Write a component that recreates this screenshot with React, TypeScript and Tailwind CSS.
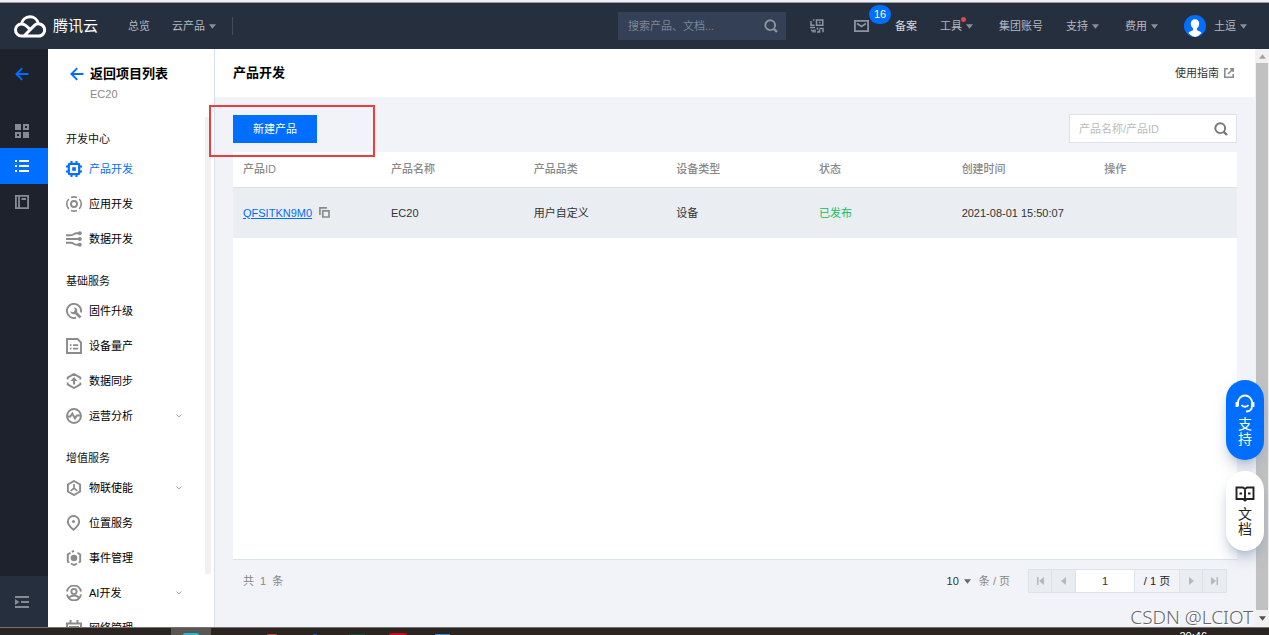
import { ReactNode } from "react";

const GREY = "#8b8b8b";

const Caret = ({ className = "" }: { className?: string }) => (
  <svg viewBox="0 0 8 5" className={`w-[7px] h-[5px] shrink-0 ${className}`} fill="currentColor">
    <path d="M0 0h8L4 5z" />
  </svg>
);

const Icon = ({ children }: { children: ReactNode }) => (
  <svg viewBox="0 0 16 16" className="w-4 h-4 shrink-0" fill="none" stroke="currentColor" strokeWidth="1.9">
    {children}
  </svg>
);

const ArrowLeft = () => (
  <svg viewBox="0 0 14 14" className="w-[14px] h-[14px] shrink-0" fill="none" stroke="#006eff" strokeWidth="1.9">
    <path d="M13.5 7H2M7.2 1.2 1.4 7l5.8 5.8" />
  </svg>
);

const SearchIcon = ({ className = "" }: { className?: string }) => (
  <svg viewBox="0 0 14 14" className={`w-[14px] h-[14px] shrink-0 ${className}`} fill="none" stroke="currentColor" strokeWidth="1.9">
    <circle cx="6.2" cy="6.2" r="4.9" />
    <path d="m9.6 9.6 3.4 3.4" strokeWidth="2.4" />
  </svg>
);

const groups = [
  {
    title: "开发中心",
    items: [
      {
        label: "产品开发",
        active: true,
        icon: (
          <>
            <rect x="2.8" y="2.8" width="10.4" height="10.4" rx="1" strokeWidth="2.2" />
            <rect x="6.2" y="6.2" width="3.6" height="3.6" fill="currentColor" stroke="none" />
            <path d="M5.5 0v3M10.5 0v3M5.5 13v3M10.5 13v3M0 5.5h3M0 10.5h3M13 5.5h3M13 10.5h3" strokeWidth="2" />
          </>
        ),
      },
      {
        label: "应用开发",
        icon: (
          <>
            <circle cx="8" cy="8" r="3" />
            <path d="M5 1.6a7.2 7.2 0 0 1 6 0M5 14.4a7.2 7.2 0 0 0 6 0M2.8 3a7.2 7.2 0 0 0 0 10M13.2 3a7.2 7.2 0 0 1 0 10" strokeWidth="1.6" />
          </>
        ),
      },
      {
        label: "数据开发",
        icon: (
          <>
            <path d="M0 4.2h5c2.5 0 3-2 5.5-2h3M0 8h14M0 11.8h5c2.5 0 3 2 5.5 2h3" />
            <circle cx="13.8" cy="2.2" r="2" fill="currentColor" stroke="none" />
            <circle cx="13.8" cy="8" r="2" fill="currentColor" stroke="none" />
            <circle cx="13.8" cy="13.8" r="2" fill="currentColor" stroke="none" />
          </>
        ),
      },
    ],
  },
  {
    title: "基础服务",
    items: [
      {
        label: "固件升级",
        icon: (
          <>
            <path d="M10.2 14.7A7.1 7.1 0 1 1 14.9 9.5" />
            <path d="m8.5 8.500 6 6" strokeWidth="2.600" />
            <path d="M8.300 4.300a3.500 3.500 0 1 1-4 4l2.400 1 1.500-.8.600-1.800z" fill="currentColor" stroke="none" />
          </>
        ),
      },
      {
        label: "设备量产",
        icon: (
          <>
            <path d="M1 1h10.5L15 4.500V15H1z" />
            <path d="M3.800 7.200h1.700M7 7.200h5.200M3.800 10.600h1.700M7 10.600h5.200" strokeWidth="1.700" />
          </>
        ),
      },
      {
        label: "数据同步",
        icon: (
          <>
            <path d="M1.700 6.500V4.600L8 1l6.300 3.600v1.900M1.700 9.500v1.900L8 15l6.300-3.600V9.500" />
            <path d="M8 4 4.500 8H7v3.500h2V8h2.500z" fill="currentColor" stroke="none" />
          </>
        ),
      },
      {
        label: "运营分析",
        expandable: true,
        icon: (
          <>
            <circle cx="8" cy="8" r="7" />
            <path d="M2 8.500h2.300l2-3 2.700 5 1.800-3H14" />
          </>
        ),
      },
    ],
  },
  {
    title: "增值服务",
    items: [
      {
        label: "物联使能",
        expandable: true,
        icon: (
          <>
            <path d="M8 1 14.100 4.500v7L8 15 1.900 11.500v-7z" />
            <path d="M8 4v4.200l-3.300 2.600M8 8.200l3.300 2.600" strokeWidth="1.700" />
          </>
        ),
      },
      {
        label: "位置服务",
        icon: (
          <>
            <path d="M7.500 14.800C4 11.800 1.800 9.300 1.800 6.700a5.700 5.700 0 0 1 11.400 0C13.200 9.300 11 11.800 7.500 14.800z" />
            <circle cx="7.500" cy="6.600" r="1.500" fill="currentColor" stroke="none" />
          </>
        ),
      },
      {
        label: "事件管理",
        icon: (
          <>
            <path d="M4.500 2.700 1.800 4.400v7.200l1.500.9M11.500 2.700l2.700 1.700v7.200l-1.500.9M5.800 1.900 8 .9M5 13.500 8 15l3-1.500" />
            <circle cx="8" cy="8" r="3.300" fill="currentColor" stroke="none" />
          </>
        ),
      },
      {
        label: "AI开发",
        expandable: true,
        icon: (
          <>
            <path d="M1 6.500A7.100 7.100 0 0 1 15 6.500M1 9.500a7.100 7.100 0 0 0 14 0" />
            <circle cx="8" cy="6.500" r="2.600" />
            <path d="M3 12.500c2.500-2.500 7.500-2.500 10 0" />
          </>
        ),
      },
      {
        label: "网络管理",
        icon: (
          <>
            <path d="M1 3.500h14V15H1z" />
            <path d="M4.500 0v4M11.500 0v4M3 7h10" strokeWidth="2" />
          </>
        ),
      },
    ],
  },
];

const columns = ["产品ID", "产品名称", "产品品类", "设备类型", "状态", "创建时间", "操作"];

const TopBar = () => (
  <header className="h-[46px] shrink-0 flex items-center bg-[#262f3e] text-[#b4b9c1] pl-[14px] pr-[22px] whitespace-nowrap">
    <a href="#" className="flex items-center gap-[7px] text-white text-[15px]">
      <svg viewBox="0 0 32 24" className="w-8 h-6" fill="none" stroke="#fff" strokeWidth="3">
        <path d="M7.500 22a6 6 0 0 1 0-12c2.300 0 4 1 5.500 2.500l2.500 2.300M7.500 9.800a8.600 8.600 0 0 1 16.800-.4M7.500 22h17a6.100 6.100 0 1 0-4.300-10.400L10.500 21.500" />
      </svg>
      腾讯云
    </a>
    <nav className="flex items-center gap-[22px] ml-[30px]">
      <a href="#">总览</a>
      <a href="#" className="flex items-center gap-1">
        云产品
        <Caret className="text-[#8a9099]" />
      </a>
    </nav>
    <span className="w-px h-[18px] ml-4 bg-[#434b58]" />
    <label className="ml-auto w-[168px] h-7 flex items-center bg-[#334056] pl-[10px] pr-2">
      <input aria-label="搜索" placeholder="搜索产品、文档..." className="flex-1 min-w-0 outline-none placeholder:text-[#7e8794]" />
      <SearchIcon className="text-[#8b949f]" />
    </label>
    <button aria-label="小程序" className="ml-6">
      <svg viewBox="0 0 14 14" className="w-[14px] h-[14px]" fill="none" stroke="#8b949f" strokeWidth="1.500">
        <path d="M4.500 1H3M1 2v4.300h3.500M6.500 1h6.300v5.300H6.500zM9 3.600h1.500" />
        <path d="M0 8.500h5M1 11.500h2.200v2M5 10.500v3M7.500 8.500v2.300M7 13h2.500v-2.500M9.500 9.500h3.500v3.800" />
      </svg>
    </button>
    <button aria-label="消息" className="relative ml-[30px]">
      <svg viewBox="0 0 15 12" className="w-[15px] h-3" fill="none" stroke="#8b949f" strokeWidth="1.800">
        <path d="M.9.9h13.200v10.200H.9zM3 3.500l4.500 3 4.500-3" />
      </svg>
      <span className="absolute left-[15px] -top-[15px] w-[22px] h-[19px] rounded-full bg-[#006eff] text-white leading-[19px] text-center">16</span>
    </button>
    <a href="#" className="ml-[26px] text-[#d5d8dc]">备案</a>
    <a href="#" className="relative ml-[23px] flex items-center gap-1">
      工具
      <Caret className="text-[#8a9099]" />
      <span className="absolute left-[21px] -top-px w-[5px] h-[5px] rounded-full bg-[#e54545]" />
    </a>
    <a href="#" className="ml-[26px]">集团账号</a>
    <a href="#" className="ml-[23px] flex items-center gap-1">
      支持
      <Caret className="text-[#8a9099]" />
    </a>
    <a href="#" className="ml-[26px] flex items-center gap-1">
      费用
      <Caret className="text-[#8a9099]" />
    </a>
    <button className="ml-[26px] flex items-center gap-1">
      <svg viewBox="0 0 22 22" className="w-[22px] h-[22px] mr-1">
        <circle cx="11" cy="11" r="11" fill="#006eff" />
        <path d="M11 4.300c-2.600 0-4.200 1.700-4.200 4.200 0 2.300 1 4 2.300 4.900v1.800c-2 .7-4 1.400-4.600 2.800A11 11 0 0 0 11 22a11 11 0 0 0 6.500-4c-.6-1.400-2.600-2.100-4.600-2.800v-1.800c1.300-.9 2.300-2.600 2.300-4.900 0-2.500-1.600-4.200-4.200-4.200z" fill="#fff" />
      </svg>
      土逗
      <Caret className="text-[#8a9099]" />
    </button>
  </header>
);

const Rail = () => (
  <div className="w-12 shrink-0 flex flex-col bg-[#1e222d] text-[#858b94] pr-1">
    <button aria-label="返回" className="h-[50px] flex items-center justify-center">
      <ArrowLeft />
    </button>
    <button aria-label="概览" className="h-[35px] mt-[14px] flex items-center justify-center">
      <svg viewBox="0 0 14 14" className="w-[14px] h-[14px]" fill="currentColor">
        <path d="M0 0h6v6H0zM8 8h6v6H8z" />
        <path d="M9 1h4v4H9zM1 9h4v4H1z" fill="none" stroke="currentColor" strokeWidth="2" />
      </svg>
    </button>
    <button aria-label="列表" className="h-9 -mr-1 pr-1 flex items-center justify-center bg-[#006eff] text-white">
      <svg viewBox="0 0 14 12" className="w-[14px] h-3" fill="currentColor">
        <path d="M0 0h2v2H0zM0 5h2v2H0zM0 10h2v2H0zM4 0h10v2H4zM4 5h10v2H4zM4 10h10v2H4z" />
      </svg>
    </button>
    <button aria-label="文档库" className="h-[35px] flex items-center justify-center">
      <svg viewBox="0 0 14 14" className="w-[14px] h-[14px]" fill="none" stroke="currentColor" strokeWidth="1.800">
        <path d="M.9.9h12.200v12.200H.9zM4 1v12M6.500 4h4.500" />
      </svg>
    </button>
    <button aria-label="展开" className="h-[51px] mt-auto -mr-1 pr-1 flex items-center justify-center bg-[#262f3e]">
      <svg viewBox="0 0 14 12" className="w-[14px] h-3" fill="currentColor">
        <path d="M0 0h14v2H0zM6 5h8v2H6zM0 10h14v2H0zM0 3l4.500 3L0 9z" />
      </svg>
    </button>
  </div>
);

const SideMenu = () => (
  <aside className="w-[167px] shrink-0 min-h-0 flex flex-col bg-white border-r border-[#d9dde6]">
    <div className="h-[65px] shrink-0 pt-[15px] pl-[22px]">
      <a href="#" className="flex items-center gap-[6px] text-[13px] leading-5 font-bold text-black">
        <ArrowLeft />
        返回项目列表
      </a>
      <p className="pl-5 leading-5 text-[#888]">EC20</p>
    </div>
    <div className="flex flex-1 min-h-0 overflow-hidden pr-[3px]">
      <nav className="flex-1 pl-[18px]">
        {groups.map((group) => (
          <section key={group.title}>
            <h3 className="h-[37px] flex items-end leading-6 text-[#111]">{group.title}</h3>
            <ul>
              {group.items.map((item) => (
                <li key={item.label}>
                  <a href="#" className={`h-[35px] flex items-center gap-[7px] ${item.active ? "text-[#006eff]" : "text-black"}`}>
                    <span className={item.active ? "text-[#006eff]" : "text-[#8b8b8b]"}>
                      <Icon>{item.icon}</Icon>
                    </span>
                    {item.label}
                    {item.expandable && (
                      <svg viewBox="0 0 6 4" className="w-[6px] h-1 ml-auto mr-[23px]" fill="none" stroke="#aaa">
                        <path d="m.5.5 2.500 2.500L5.500.5" />
                      </svg>
                    )}
                  </a>
                </li>
              ))}
            </ul>
          </section>
        ))}
      </nav>
      <div className="w-[6px] h-[89%] mt-[3px] bg-[#f1f1f1]" />
    </div>
  </aside>
);

const Pager = () => (
  <footer className="flex items-center justify-between px-[10px] mt-[9px] text-[#888]">
    <span>共&nbsp; 1 &nbsp;条</span>
    <div className="flex items-center">
      <button className="flex items-center gap-1 text-[#333]">
        10
        <Caret className="text-[#666] ml-px" />
      </button>
      <span className="ml-2 mr-[18px]">条 / 页</span>
      <div className="flex h-6 border border-[#dde2ea] divide-x divide-[#dde2ea] text-[#b5b8bd]">
        <button aria-label="首页" className="w-[23px] flex items-center justify-center bg-[#e9ecf1]">
          <svg viewBox="0 0 7 8" className="w-[7px] h-2" fill="currentColor"><path d="M0 0h1.500v8H0zM7 0v8L2 4z" /></svg>
        </button>
        <button aria-label="上一页" className="w-6 flex items-center justify-center bg-[#e9ecf1]">
          <svg viewBox="0 0 5 8" className="w-[5px] h-2" fill="currentColor"><path d="M5 0v8L0 4z" /></svg>
        </button>
        <input aria-label="页码" defaultValue="1" className="w-[59px] bg-white text-center text-[#333] outline-none" />
        <span className="w-[45px] text-center leading-[22px] text-[#222]">/ 1 页</span>
        <button aria-label="下一页" className="w-[23px] flex items-center justify-center bg-[#e9ecf1]">
          <svg viewBox="0 0 5 8" className="w-[5px] h-2" fill="currentColor"><path d="M0 0v8l5-4z" /></svg>
        </button>
        <button aria-label="末页" className="w-[23px] flex items-center justify-center bg-[#e9ecf1]">
          <svg viewBox="0 0 7 8" className="w-[7px] h-2" fill="currentColor"><path d="M5.500 0H7v8H5.500zM0 0v8l5-4z" /></svg>
        </button>
      </div>
    </div>
  </footer>
);

const Content = () => (
  <main className="flex-1 min-w-0 flex flex-col bg-[#f2f3f8]">
    <div className="h-12 shrink-0 flex items-center justify-between bg-white pl-[18px] pr-[21px]">
      <h1 className="text-[13px] font-bold text-black">产品开发</h1>
      <a href="#" className="flex items-center gap-[5px] text-[#333]">
        使用指南
        <svg viewBox="0 0 10 10" className="w-[10px] h-[10px]" fill="none" stroke={GREY} strokeWidth="1.600">
          <path d="M4 .8H.8v8.400h8.400V6M6 .8h3.200V4M9.200.8 4 6" />
        </svg>
      </a>
    </div>
    <div className="flex-1 flex flex-col px-[18px] pb-[34px] pt-[17px]">
      <div className="flex items-center justify-between">
        <div className="relative">
          <button className="w-[84px] h-7 bg-[#006eff] text-white">新建产品</button>
          <span className="absolute z-10 -left-6 -top-[10px] w-[166px] h-[52px] border-2 border-[#ee3b3f] pointer-events-none" />
        </div>
        <label className="w-[168px] h-[29px] flex items-center bg-white border border-[#dde2ea] pl-[9px] pr-2">
          <input aria-label="产品名称/产品ID" placeholder="产品名称/产品ID" className="flex-1 min-w-0 outline-none placeholder:text-[#bbb]" />
          <SearchIcon className="text-[#777]" />
        </label>
      </div>
      <div className="flex-1 mt-[9px] bg-white border-b border-[#dde2ea]">
        <table className="w-full table-fixed text-left">
          <thead>
            <tr className="h-[35px] border-b border-[#dde2ea] text-[#888]">
              {columns.map((column) => (
                <th key={column} className="pl-[10px] font-medium first:w-[148px]">{column}</th>
              ))}
            </tr>
          </thead>
          <tbody>
            <tr className="h-[51px] bg-[#eaedf2] text-[#333]">
              <td className="pl-[10px]">
                <div className="flex items-center gap-[7px]">
                  <a href="#" className="text-[#006eff] underline">QFSITKN9M0</a>
                  <button aria-label="复制">
                    <svg viewBox="0 0 11 11" className="w-[11px] h-[11px]" fill="none" stroke={GREY} strokeWidth="1.700">
                      <path d="M3.800 3.800h6.200v6.200H3.800zM.9 8V.9H8" />
                    </svg>
                  </button>
                </div>
              </td>
              <td className="pl-[10px]">EC20</td>
              <td className="pl-[10px]">用户自定义</td>
              <td className="pl-[10px]">设备</td>
              <td className="pl-[10px] text-[#0abf5b]">已发布</td>
              <td className="pl-[10px] whitespace-nowrap">2021-08-01 15:50:07</td>
              <td />
            </tr>
          </tbody>
        </table>
      </div>
      <Pager />
    </div>
  </main>
);

const ScrollBar = () => (
  <div className="w-[14px] shrink-0 flex flex-col items-center bg-[#f1f1f1]">
    <span className="h-[14px] flex items-center text-[#a3a3a3]">
      <Caret className="rotate-180" />
    </span>
    <span className="w-3 flex-1 bg-[#c1c1c1]" />
    <span className="h-[17px] flex items-center text-[#505050]">
      <Caret />
    </span>
  </div>
);

const FloatingHelp = () => (
  <div className="absolute right-[5px] bottom-[84px] z-20 flex flex-col gap-[11px] text-[14px] leading-[15px]">
    <button className="w-[38px] h-20 rounded-full bg-[#006eff] text-white flex flex-col items-center justify-center shadow-lg shadow-slate-400/60">
      <svg viewBox="0 0 20 20" className="w-5 h-5 mb-[3px]" fill="none" stroke="currentColor" strokeWidth="1.800">
        <path d="M3 12V8.500a7 7 0 0 1 14 0V12c0 3.500-2.500 5.500-6 5.500M6.500 11c1.500 2.300 5.500 2.300 7 0" />
        <path d="M2 8v5M18 8v5" strokeWidth="2.800" />
      </svg>
      <span>支</span>
      <span>持</span>
    </button>
    <button className="w-[38px] h-20 rounded-full bg-white text-[#222] flex flex-col items-center justify-center shadow-lg shadow-slate-400/60">
      <svg viewBox="0 0 20 16" className="w-5 h-4 mb-[5px]" fill="none" stroke="currentColor" strokeWidth="1.900">
        <path d="M1.500 1.500H8l2 1.500 2-1.500h6.500v11.500H12l-2 1.500-2-1.500H1.500zM10 3v11M4.500 7.500H7M13 7.500h2.500" />
      </svg>
      <span>文</span>
      <span>档</span>
    </button>
  </div>
);

const TaskBar = () => (
  <div className="h-2 shrink-0 flex items-end overflow-hidden bg-[#2a2523] border-t border-[#77716c] pl-[171px] pr-[62px]">
    <span className="w-10 h-full bg-[#595653] flex items-end justify-center">
      <i className="w-4 h-[2px] rounded-t-full bg-[#2bb9c8]" />
    </span>
    <i className="ml-14 w-[10px] h-px rounded-t-full bg-[#d0443a]" />
    <i className="ml-9 w-1 h-px rounded-t-full bg-[#1268b3]" />
    <i className="ml-8 w-4 h-px bg-[#1c4a2c]" />
    <i className="ml-6 w-[18px] h-[2px] rounded-t-full bg-[#d9001b]" />
    <i className="ml-7 w-[15px] h-px bg-[#3a8fd0]" />
    <time className="ml-auto h-[5px] text-white leading-3">20:46</time>
  </div>
);

export default function App() {
  return (
    <div className="relative h-screen flex flex-col overflow-hidden text-[11px] leading-4 font-['Liberation_Sans','Noto_Sans_CJK_SC',sans-serif]">
      <div className="h-[3px] shrink-0 bg-[#f0f0f5] border-b border-[#9b9ca3]" />
      <TopBar />
      <div className="flex flex-1 min-h-0">
        <Rail />
        <SideMenu />
        <Content />
        <ScrollBar />
      </div>
      <TaskBar />
      <FloatingHelp />
      <span className="absolute right-4 bottom-[6px] z-20 text-[19px] leading-6 font-light text-[#66686c] font-['Noto_Sans',sans-serif] [text-shadow:1px_1px_0_#fff]">
        CSDN @LCIOT
      </span>
    </div>
  );
}
